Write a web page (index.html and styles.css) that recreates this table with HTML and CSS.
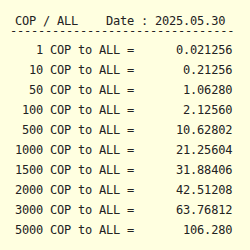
FILE: index.html
```html
<!DOCTYPE html>
<html>
<head>
<meta charset="utf-8">
<link rel="stylesheet" href="styles.css">
</head>
<body>
<div class="board">
  <div class="head">COP / ALL    Date : 2025.05.30</div>
  <div class="rule">--------------------------------</div>
  <div class="rows">
    <div class="row">   1 COP to ALL =      0.021256</div>
    <div class="row">  10 COP to ALL =       0.21256</div>
    <div class="row">  50 COP to ALL =       1.06280</div>
    <div class="row"> 100 COP to ALL =       2.12560</div>
    <div class="row"> 500 COP to ALL =      10.62802</div>
    <div class="row">1000 COP to ALL =      21.25604</div>
    <div class="row">1500 COP to ALL =      31.88406</div>
    <div class="row">2000 COP to ALL =      42.51208</div>
    <div class="row">3000 COP to ALL =      63.76812</div>
    <div class="row">5000 COP to ALL =       106.280</div>
  </div>
</div>
</body>
</html>
```
FILE: styles.css
```css
html, body {
  margin: 0;
  padding: 0;
  background: #ffffe0;
}
.board {
  padding: 14px 0 0 15px;
  font-family: "DejaVu Sans Mono", monospace;
  font-size: 12px;
  letter-spacing: -0.22px;
  color: #222;
}
.head,
.rule,
.row {
  white-space: pre;
}
.head {
  line-height: 14px;
}
.rule {
  line-height: 6px;
  margin-left: -5px;
}
.rows {
  margin-top: 6px;
}
.row {
  line-height: 20px;
}
```
